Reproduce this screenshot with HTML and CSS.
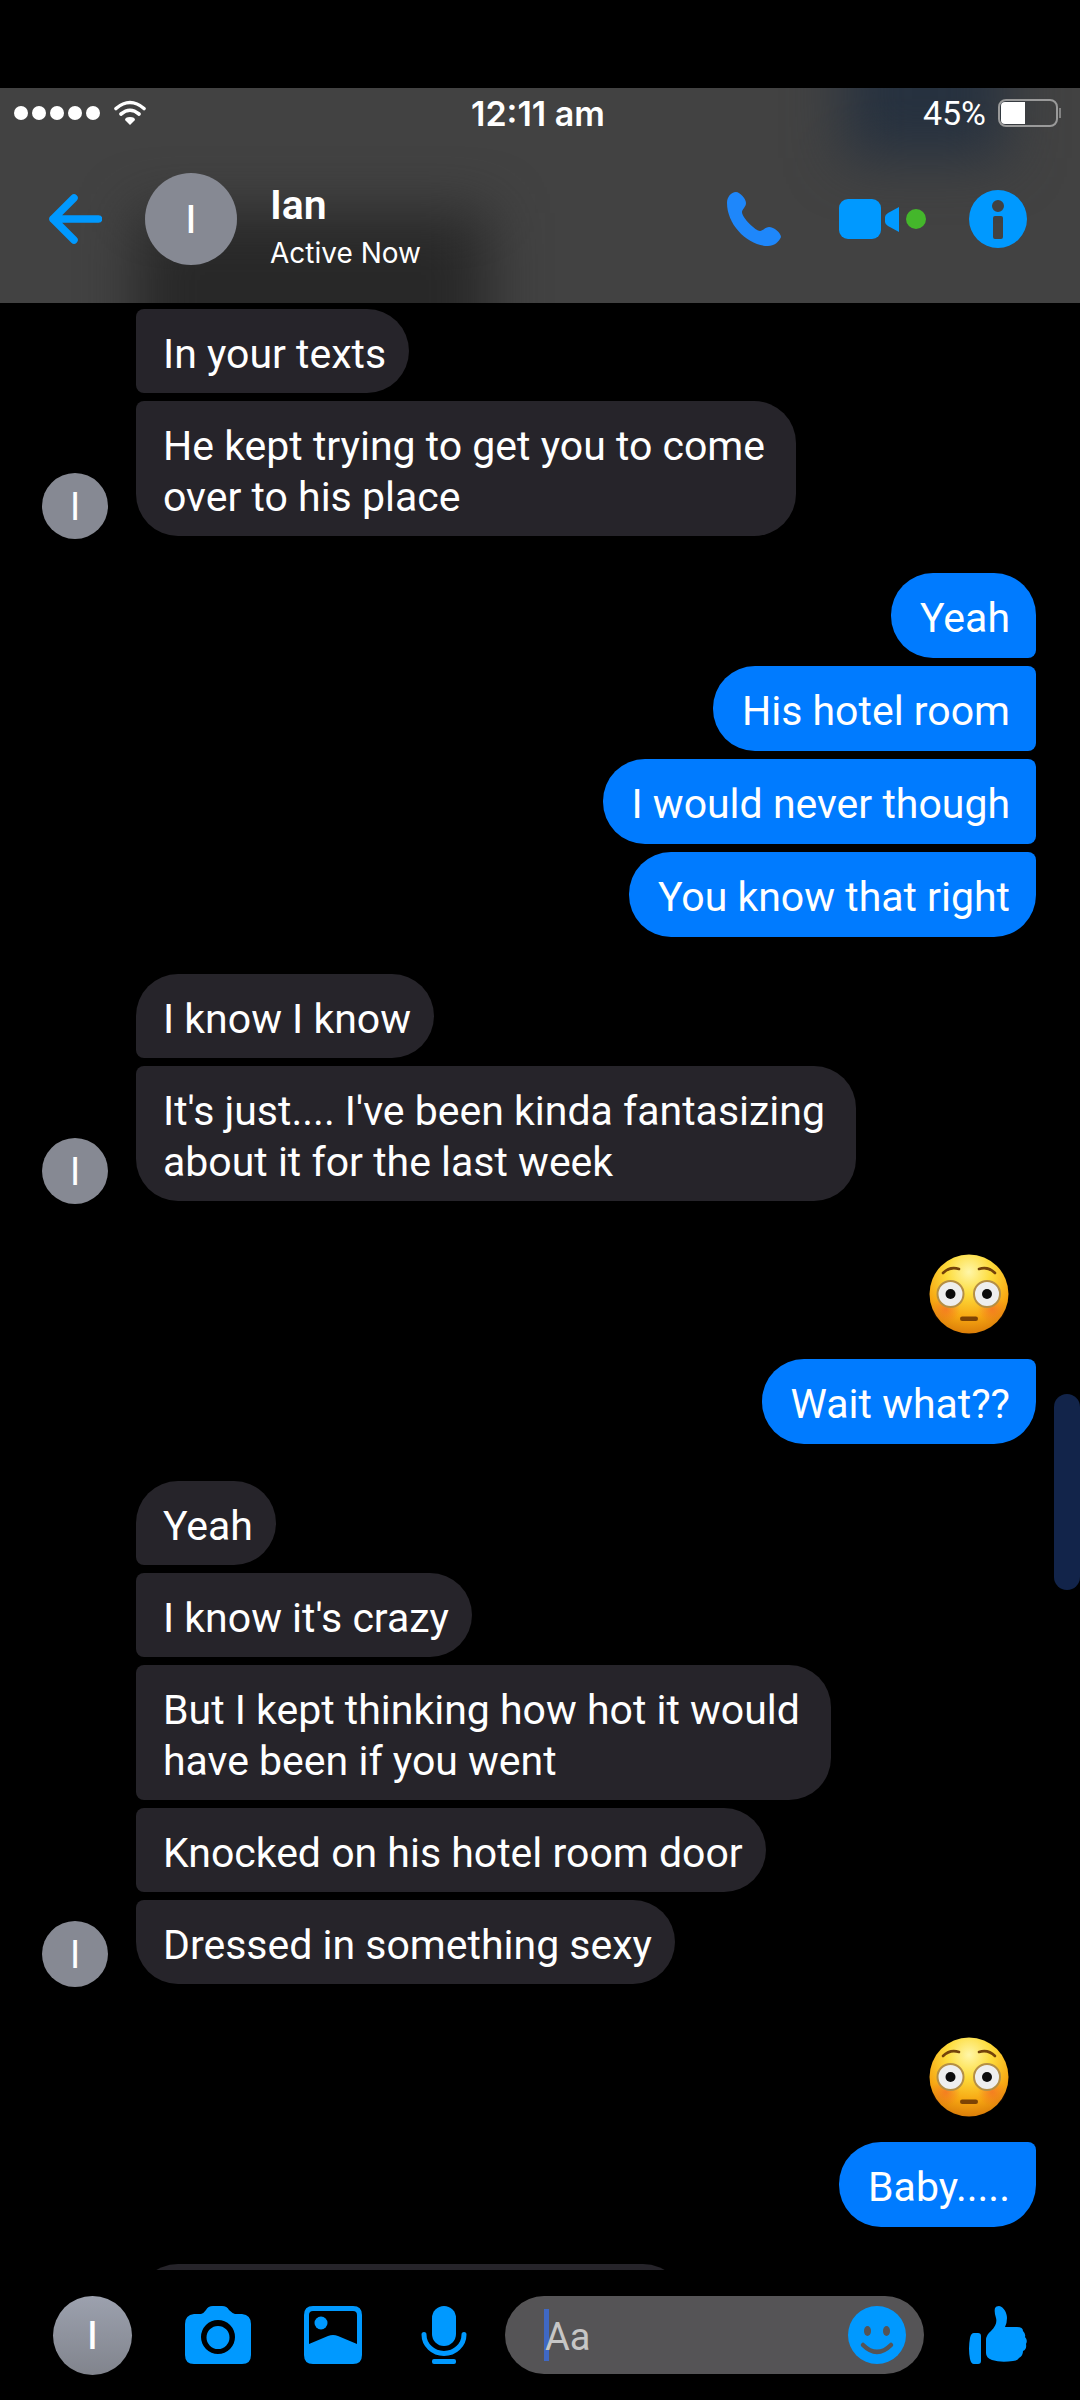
FILE: index.html
```html
<!DOCTYPE html>
<html lang="en">
<head>
<meta charset="utf-8">
<meta name="viewport" content="width=device-width, initial-scale=1">
<title>Ian</title>
<link rel="stylesheet" href="styles.css">
</head>
<body>
<svg class="defs" aria-hidden="true">
  <defs>
    <radialGradient id="skin" cx="50%" cy="22%" r="80%">
      <stop offset="0" stop-color="#fff6a8"/>
      <stop offset=".35" stop-color="#fddc3c"/>
      <stop offset=".72" stop-color="#f7a712"/>
      <stop offset="1" stop-color="#d97a08"/>
    </radialGradient>
    <radialGradient id="blush">
      <stop offset="0" stop-color="#f2602a" stop-opacity=".6"/>
      <stop offset="1" stop-color="#f2602a" stop-opacity="0"/>
    </radialGradient>
    <symbol id="flushed" viewBox="0 0 80 80">
      <circle cx="40" cy="40" r="39.5" fill="url(#skin)"/>
      <circle cx="17" cy="55" r="14" fill="url(#blush)"/>
      <circle cx="63" cy="55" r="14" fill="url(#blush)"/>
      <path d="M14 19Q21 12 30 15M66 19Q59 12 50 15" fill="none" stroke="#74430a" stroke-width="2.6" stroke-linecap="round"/>
      <circle cx="21.5" cy="40" r="13" fill="#eee" stroke="#b58f45" stroke-width="2"/>
      <circle cx="58" cy="40" r="13" fill="#eee" stroke="#b58f45" stroke-width="2"/>
      <circle cx="21.5" cy="40" r="5" fill="#0c0c0c"/>
      <circle cx="58" cy="40" r="5" fill="#0c0c0c"/>
      <rect x="31" y="62.500" width="18" height="4.500" rx="2.200" fill="#7d4304"/>
    </symbol>
  </defs>
</svg>

<header class="top">
  <div class="glow glow-dark"></div>
  <div class="glow glow-blue"></div>
  <div class="status">
    <div class="signal">
      <i class="dot"></i><i class="dot"></i><i class="dot"></i><i class="dot"></i><i class="dot"></i>
      <svg class="wifi" viewBox="0 0 32 26" aria-label="Wi-Fi">
        <path d="M2 8.500Q16-3.500 30 8.500M7 14Q16 6.500 25 14" fill="none" stroke="#fff" stroke-width="3.600" stroke-linecap="round"/>
        <path d="M16 25l-5-5q0-3 5-3t5 3z" fill="#fff"/>
      </svg>
    </div>
    <time class="clock">12:11 am</time>
    <div class="power">
      <span>45%</span>
      <svg class="battery" viewBox="0 0 64 28" aria-hidden="true">
        <rect x="1" y="1" width="58" height="26" rx="7" fill="none" stroke="#9a9a9a" stroke-width="2"/>
        <path d="M27 3v22H7q-4 0-4-4V7q0-4 4-4z" fill="#fff"/>
        <path d="M62 9v10" stroke="#9a9a9a" stroke-width="1.500"/>
      </svg>
    </div>
  </div>
  <div class="contact">
    <button class="icon" aria-label="Back">
      <svg class="arrow" viewBox="0 0 54 50"><path d="M26 4L5 25l21 21M5 25h45.500" fill="none" stroke="#0099ff" stroke-width="7.500" stroke-linecap="round" stroke-linejoin="round"/></svg>
    </button>
    <span class="avatar avatar-lg">I</span>
    <div class="who">
      <h1>Ian</h1>
      <p>Active Now</p>
    </div>
    <button class="icon call" aria-label="Call">
      <svg class="phone" viewBox="0 0 54 54"><path d="M9 0C4 0 0 5 0 11C0 33 21 54 41 54C47 54 52 50 54 45C54 41 47 35 42 35C38 35 36 39 33 39C29 39 15 26 15 20C15 17 19 15 19 11C19 7 13 0 9 0Z" fill="#1e87fb"/></svg>
    </button>
    <button class="icon video" aria-label="Video call">
      <svg class="camcorder" viewBox="0 0 60 42"><rect x="0" y="1" width="42" height="40" rx="9"/><path d="M60 9v25L49 28q-3-2-3-4v-5q0-2 3-4z"/></svg>
      <i class="online"></i>
    </button>
    <button class="icon" aria-label="Info">
      <svg class="round" viewBox="0 0 58 58"><path fill-rule="evenodd" d="M29 0a29 29 0 1 0 0 58a29 29 0 1 0 0-58zM29 10a6 6 0 1 1 0 12a6 6 0 1 1 0-12zM26 26h6q2 0 2 2v19q0 2-2 2h-6q-2 0-2-2V28q0-2 2-2z"/></svg>
    </button>
  </div>
</header>

<main class="chat">
  <section class="group them">
    <p class="bubble joined">In your texts</p>
    <p class="bubble wrapped">He kept trying to get you to come<br>over to his place</p>
    <span class="avatar avatar-sm">I</span>
  </section>
  <section class="group me">
    <p class="bubble">Yeah</p>
    <p class="bubble">His hotel room</p>
    <p class="bubble">I would never though</p>
    <p class="bubble">You know that right</p>
  </section>
  <section class="group them">
    <p class="bubble">I know I know</p>
    <p class="bubble wrapped">It's just.... I've been kinda fantasizing<br>about it for the last week</p>
    <span class="avatar avatar-sm">I</span>
  </section>
  <section class="group me">
    <svg class="emoji" role="img" aria-label="Flushed face"><use href="#flushed"/></svg>
    <p class="bubble">Wait what??</p>
  </section>
  <section class="group them">
    <p class="bubble">Yeah</p>
    <p class="bubble">I know it's crazy</p>
    <p class="bubble wrapped">But I kept thinking how hot it would<br>have been if you went</p>
    <p class="bubble">Knocked on his hotel room door</p>
    <p class="bubble">Dressed in something sexy</p>
    <span class="avatar avatar-sm">I</span>
  </section>
  <section class="group me">
    <svg class="emoji" role="img" aria-label="Flushed face"><use href="#flushed"/></svg>
    <p class="bubble">Baby.....</p>
  </section>
  <section class="group them">
    <p class="bubble incoming"></p>
  </section>
  <div class="thumb"></div>
</main>

<footer class="composer">
  <span class="avatar avatar-md">I</span>
  <button class="icon" aria-label="Camera">
    <svg class="camera" viewBox="0 0 66 58"><path fill-rule="evenodd" d="M9 8h7q3-1 5-4q2-4 7-4h9q5 0 7 4q3 3 6 4h7q9 1 9 10v31q0 9-9 9H9q-9 0-9-9V18q0-9 9-10zM33 14a17 17 0 1 0 0 34a17 17 0 1 0 0-34zM33 20a11.500 11.500 0 1 1 0 23a11.500 11.500 0 1 1 0-23z"/></svg>
  </button>
  <button class="icon" aria-label="Photos">
    <svg class="round" viewBox="0 0 58 58"><path fill-rule="evenodd" d="M9 0h40q9 0 9 9v40q0 9-9 9H9q-9 0-9-9V9q0-9 9-9zM9 5q-4 0-4 4v29l19-8q5-2 10 0l19 8V9q0-4-4-4z"/><circle cx="17" cy="17" r="6.500"/></svg>
  </button>
  <button class="icon" aria-label="Voice message">
    <svg class="round" viewBox="0 0 58 58"><rect x="17" y="0" width="24" height="40" rx="12"/><path d="M9 28.500a20 19 0 0 0 40 0" fill="none" stroke="#0099ff" stroke-width="5" stroke-linecap="round"/><rect x="17" y="53" width="24" height="5" rx="2"/></svg>
  </button>
  <div class="field">
    <i class="caret"></i>
    <input type="text" placeholder="Aa" aria-label="Message">
    <button class="icon" aria-label="Emoji">
      <svg class="round" viewBox="0 0 58 58"><circle cx="29" cy="29" r="29"/><ellipse cx="19.500" cy="25" rx="3.500" ry="5" fill="#555456"/><ellipse cx="38.500" cy="25" rx="3.500" ry="5" fill="#555456"/><path d="M15 39q14 14 28 0" fill="none" stroke="#555456" stroke-width="4.500" stroke-linecap="round"/></svg>
    </button>
  </div>
  <button class="icon" aria-label="Like">
    <svg class="round" viewBox="0 0 58 58"><path d="M5 27h4q3 0 3 3v25q0 3-3 3H5q-3 0-4-5q-2-10 0-21q1-5 4-5zM17 34q0-5 5-9c5-5 6-9 5-13q-2-6-1-10q1-2 4-2c5 1 8 7 8 12q0 5-2 9h12q6 0 6 4q3 3 2 6q3 3 1 7q1 5-3 7q0 5-4 7q-2 3-6 3q-12 2-21-1q-6-2-6-7z"/></svg>
  </button>
</footer>
</body>
</html>
```
FILE: styles.css
```css
* { box-sizing: border-box; }

body {
  margin: 0;
  height: 100vh;
  padding-top: 88px;
  display: flex;
  flex-direction: column;
  overflow: hidden;
  background: #000;
  color: #fff;
  font-family: Inter, "Liberation Sans", sans-serif;
}

h1, p { margin: 0; }
svg { display: block; fill: #0099ff; }
.defs { position: absolute; width: 0; height: 0; }

.icon {
  display: flex;
  align-items: center;
  flex: none;
  padding: 0;
  border: 0;
  background: none;
}
.round { width: 58px; height: 58px; }

.avatar {
  display: flex;
  align-items: center;
  justify-content: center;
  flex: none;
  border-radius: 50%;
  background: #868993;
}
.avatar-lg { width: 92px; height: 92px; font-size: 38px; font-weight: 500; }
.avatar-md { width: 79px; height: 79px; font-size: 38px; font-weight: 500; background: linear-gradient(#9ca1ae, #81848d); }
.avatar-sm { width: 66px; height: 66px; font-size: 38px; }

/* Header */
.top {
  position: relative;
  flex: none;
  overflow: hidden;
  padding-bottom: 3px;
  background: #424242;
}
.glow { position: absolute; filter: blur(28px); }
.glow-dark { left: 138px; top: 125px; width: 350px; height: 160px; background: #282828; }
.glow-blue { right: 75px; top: -60px; width: 160px; height: 130px; background: #26313f; }

.status {
  position: relative;
  display: grid;
  grid-template-columns: 1fr auto 1fr;
  align-items: center;
  height: 50px;
  padding: 0 18px 0 14px;
  font-size: 34px;
}
.signal { display: flex; align-items: center; gap: 4px; }
.dot { width: 14px; height: 14px; border-radius: 50%; background: #fff; }
.wifi { width: 32px; height: 26px; margin-left: 10px; }
.clock { font-weight: 600; }
.power { display: flex; align-items: center; justify-content: flex-end; gap: 12px; font-family: Roboto, sans-serif; }
.battery { width: 64px; height: 28px; }

.contact {
  position: relative;
  display: flex;
  align-items: center;
  height: 162px;
  padding: 0 53px 0 48px;
}
.arrow { width: 54px; height: 50px; }
.contact .avatar { margin-left: 43px; }
.who { flex: 1; padding: 20px 0 0 33px; }
.who h1 { font: 600 41px/48px Roboto, sans-serif; }
.who p { font-size: 28px; line-height: 48px; }
.phone { width: 54px; height: 54px; }
.video { gap: 7px; margin: 0 43px 0 58px; }
.camcorder { width: 60px; height: 42px; }
.online { width: 20px; height: 20px; border-radius: 50%; background: #44b72b; }

/* Conversation */
.chat {
  position: relative;
  flex: 1;
  min-height: 0;
  overflow: hidden;
  display: flex;
  flex-direction: column;
  gap: 37px;
  padding: 6px 44px 0 136px;
}
.group {
  position: relative;
  flex: none;
  display: flex;
  flex-direction: column;
  gap: 8px;
}
.them { align-items: flex-start; }
.me { align-items: flex-end; }

.bubble {
  font-family: Roboto, "Liberation Sans", sans-serif;
  font-size: 41px;
  line-height: 51px;
  white-space: nowrap;
}
.them .bubble {
  padding: 20px 23px 13px 27px;
  border-radius: 8px 42px 42px 8px;
  background: #26242a;
}
.them .bubble.wrapped { padding-right: 31px; }
.them .bubble:first-child:not(.joined) { border-top-left-radius: 42px; }
.them .bubble:nth-last-child(2) { border-bottom-left-radius: 42px; }
.them .bubble.joined { border-bottom-left-radius: 8px; }
.them .incoming { width: 61%; height: 84px; }

.me .bubble {
  padding: 20px 26px 14px 29px;
  border-radius: 42px 8px 8px 42px;
  background: #007bff;
}
.me .bubble:first-child { border-top-right-radius: 42px; }
.me .bubble:last-child { border-bottom-right-radius: 42px; }

.emoji { width: 80px; height: 80px; margin: 16px 27px 17px 0; }

/* The sender's picture hangs in the gutter beside the last bubble. */
.group .avatar { position: absolute; left: -94px; bottom: -3px; }

.thumb {
  position: absolute;
  right: 0;
  top: 52%;
  margin-top: 68px;
  width: 26px;
  height: 196px;
  border-radius: 13px;
  background: #12244a;
}

/* Composer */
.composer {
  flex: none;
  display: flex;
  align-items: center;
  gap: 53px;
  height: 130px;
  padding: 0 53px;
}
.camera { width: 66px; height: 58px; }
.field {
  position: relative;
  flex: 1;
  min-width: 0;
  display: flex;
  align-items: center;
  height: 78px;
  margin: 0 -8px 0 -21px;
  padding: 0 18px 0 39px;
  border-radius: 39px;
  background: #555456;
}
.field input {
  position: relative;
  flex: 1;
  min-width: 0;
  height: 52px;
  padding: 4px 0 0 1px;
  border: 0;
  outline: 0;
  background: none;
  color: #fff;
  font: 38px Roboto, "Liberation Sans", sans-serif;
}
.field input::placeholder { color: #c6c6c6; opacity: 1; }
.caret { position: absolute; left: 39px; width: 5px; height: 52px; background: #3f68c4; }
```
